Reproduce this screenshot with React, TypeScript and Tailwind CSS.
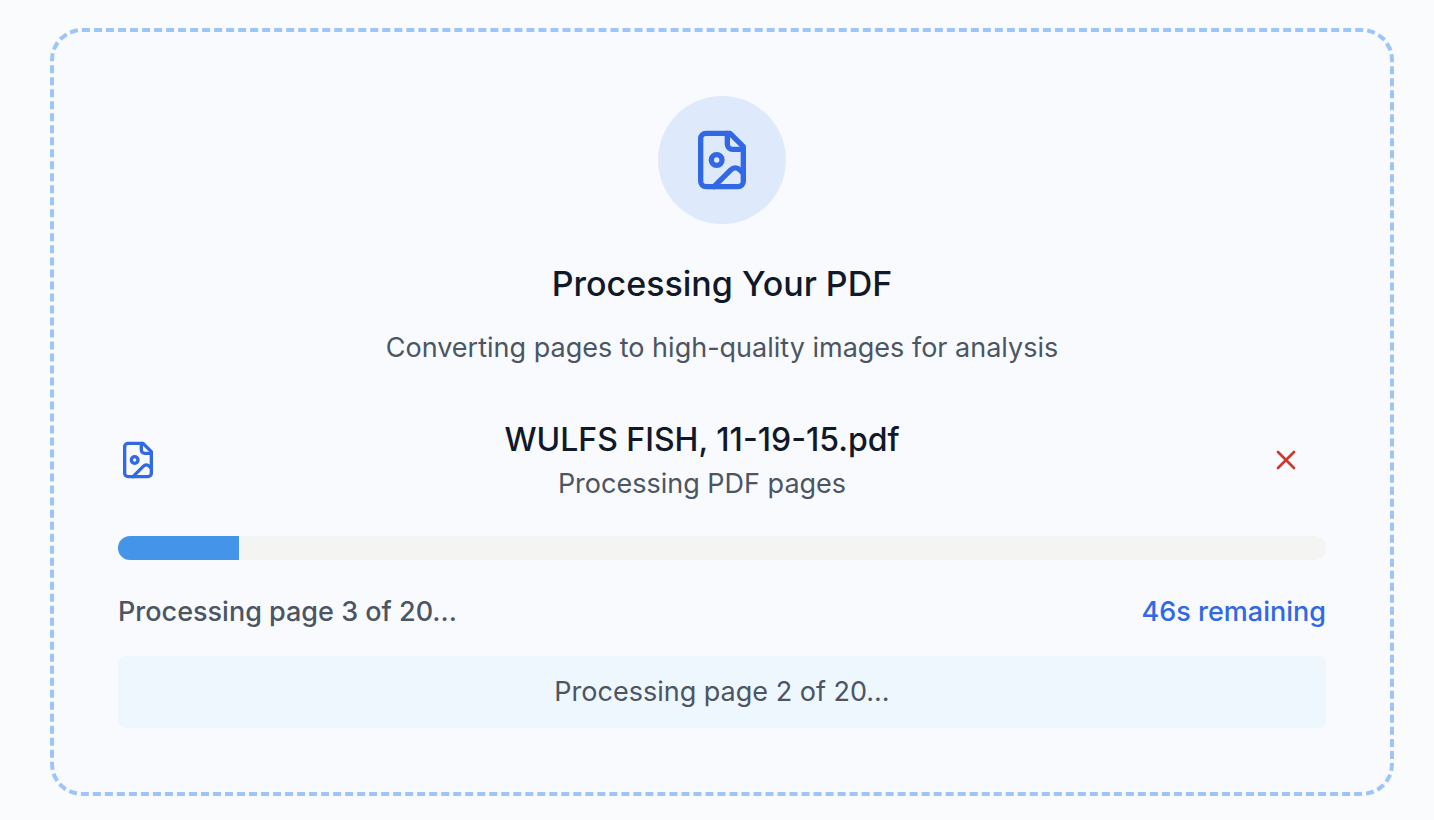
import { X } from "lucide-react";

function FileImageIcon({ className }: { className: string }) {
  return (
    <svg
      viewBox="0 0 24 24"
      fill="none"
      stroke="currentColor"
      strokeWidth="2"
      strokeLinecap="round"
      strokeLinejoin="round"
      aria-hidden="true"
      className={className}
    >
      <path d="M15 2H6a2 2 0 0 0-2 2v16a2 2 0 0 0 2 2h12a2 2 0 0 0 2-2V7Z" />
      <path d="M14 2v4a2 2 0 0 0 2 2h4" />
      <circle cx="10" cy="12" r="2" />
      <path d="m20 17-1.296-1.296a2.41 2.41 0 0 0-3.408 0L9 22" />
    </svg>
  );
}

export default function App() {
  const progress = 10;

  return (
    <main className="min-h-screen bg-[#f9fbfc] pt-7 pr-10 pb-6 pl-[50px] font-['Inter','Liberation_Sans',sans-serif] text-[27px] leading-10 text-[#4b5563]">
      <section className="rounded-[32px] border-4 border-dashed border-[#9dc5fa] bg-[#f8fafe] p-16">
        <header className="flex flex-col items-center text-center">
          <div className="flex size-32 items-center justify-center rounded-full bg-[#dee9fc] text-[#3168e5]">
            <FileImageIcon className="size-16" />
          </div>
          <h1 className="mt-8 text-[34px] leading-[56px] font-medium text-[#111827]">Processing Your PDF</h1>
          <p className="mt-4">Converting pages to high-quality images for analysis</p>
        </header>

        <div className="mt-12 flex items-center">
          <FileImageIcon className="size-10 shrink-0 text-[#3168e5]" />
          <div className="min-w-0 flex-1 text-center">
            <h2 className="text-[32px] leading-[48px] font-medium text-[#111827]">WULFS FISH, 11-19-15.pdf</h2>
            <p>Processing PDF pages</p>
          </div>
          <button type="button" aria-label="Cancel" className="shrink-0 px-6 py-4 text-[#cb3a31]">
            <X className="size-8" />
          </button>
        </div>

        <div
          role="progressbar"
          aria-label="PDF processing"
          aria-valuenow={progress}
          aria-valuemin={0}
          aria-valuemax={100}
          className="mt-8 h-6 overflow-hidden rounded-full bg-[#f4f5f3]"
        >
          <div className="h-full bg-[#4494ea]" style={{ width: `${progress}%` }} />
        </div>

        <div className="mt-8 flex justify-between font-medium">
          <span>Processing page 3 of 20...</span>
          <span className="text-[#3168e5]">46s remaining</span>
        </div>

        <p className="mt-6 rounded-lg bg-[#eef6fe] p-4 text-center">Processing page 2 of 20...</p>
      </section>
    </main>
  );
}
